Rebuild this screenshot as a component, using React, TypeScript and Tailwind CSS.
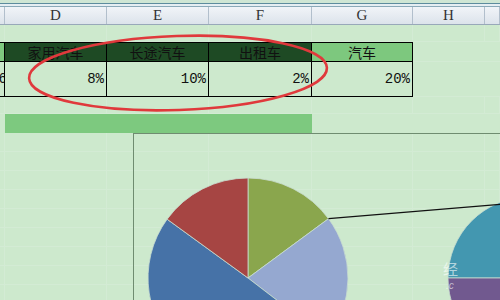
const cols = [
  { key: "C", w: "w-[5px]" },
  { key: "D", w: "w-[102px]" },
  { key: "E", w: "w-[102px]" },
  { key: "F", w: "w-[103px]" },
  { key: "G", w: "w-[101px]" },
  { key: "H", w: "w-[72px]" },
  { key: "I", w: "flex-1" },
];

function GridRow({ h }: { h: string }) {
  return (
    <div className={`flex ${h} border-b border-[#d3ebd4]`}>
      {cols.map((c) => (
        <div key={c.key} className={`${c.w} shrink-0 border-r border-[#d3ebd4]`} />
      ))}
    </div>
  );
}

function PieChart() {
  return (
    <div className="absolute left-[133px] top-[133px] w-[400px] h-[200px] border-l border-t border-[#6f8c70]">
      <svg width="400" height="200" viewBox="0 0 400 200" className="block">
        <g stroke="#c9ddd0" strokeWidth="0.8">
          <path d="M114 144 L114 44 A100 100 0 0 1 194.5 84.7 Z" fill="#8aa64d" />
          <path d="M114 144 L194.5 84.7 A100 100 0 0 1 193.3 204.9 Z" fill="#95a8d0" />
          <path d="M114 144 L193.3 204.9 A100 100 0 0 1 33.1 85.2 Z" fill="#4672a7" />
          <path d="M114 144 L33.1 85.2 A100 100 0 0 1 114 44 Z" fill="#a64543" />
          <path d="M314 144 A81 81 0 0 1 476 144 Z" fill="#4397b0" />
          <path d="M314 144 A81 81 0 0 0 476 144 Z" fill="#71598f" />
        </g>
        <line x1="194.5" y1="84.7" x2="370" y2="70" stroke="#111" strokeWidth="1.2" />
      </svg>
      <div className="absolute left-[309px] top-[127px] text-[15px] leading-none text-white/60 font-['Noto_Sans_CJK_SC',sans-serif]">
        经
      </div>
      <div className="absolute left-[312px] top-[147px] text-[10px] leading-none text-white/60 font-['Liberation_Sans',sans-serif] italic">
        .c
      </div>
    </div>
  );
}

export default function App() {
  const headers = [
    { label: "家用汽车", w: "w-[102px]" },
    { label: "长途汽车", w: "w-[102px]" },
    { label: "出租车", w: "w-[103px]" },
  ];
  const values = [
    { v: "8%", w: "w-[102px]" },
    { v: "10%", w: "w-[102px]" },
    { v: "2%", w: "w-[103px]" },
    { v: "20%", w: "w-[101px]" },
  ];

  return (
    <div className="relative w-[500px] h-[300px] overflow-hidden bg-[#cde9cd]">
      {/* top window chrome */}
      <div className="h-[3px] bg-[#cfe6d4]" />
      <div className="h-px bg-[#5d8c9e]" />
      <div className="h-[2px] bg-[#e6eef2]" />
      <div className="h-px bg-[#8aa9b8]" />

      {/* column headers */}
      <div className="flex h-[18px] border-b border-[#98a8b9] bg-gradient-to-b from-[#f1f4f8] to-[#dce3eb] text-[15px] leading-none text-[#333] font-['Liberation_Serif',serif]">
        {cols.map((c) => (
          <div
            key={c.key}
            className={`${c.w} shrink-0 flex items-center justify-center border-r border-[#b2bfcc]`}
          >
            {c.key !== "C" && c.key !== "I" ? c.key : ""}
          </div>
        ))}
      </div>

      <GridRow h="h-[17px]" />

      {/* table header */}
      <div className="flex h-[20px] text-[14px] leading-none text-[#111] font-['Noto_Sans_CJK_SC',sans-serif]">
        <div className="w-[5px] shrink-0 bg-[#7fc97f] border-y border-r border-black" />
        {headers.map((h) => (
          <div
            key={h.label}
            className={`${h.w} shrink-0 flex items-center justify-center bg-[#1e4a24] border-y border-r border-black`}
          >
            {h.label}
          </div>
        ))}
        <div className="w-[101px] shrink-0 flex items-center justify-center bg-[#7dc87e] border-y border-r border-black">
          汽车
        </div>
        <div className="flex-1 border-b border-[#d3ebd4]" />
      </div>

      {/* data row */}
      <div className="flex h-[35px] text-[14px] leading-none text-[#111] font-['Liberation_Mono',monospace]">
        <div className="w-[5px] shrink-0 overflow-hidden border-b border-r border-black flex items-center justify-end">
          <span className="-mr-[3px]">6</span>
        </div>
        {values.map((d) => (
          <div
            key={d.v}
            className={`${d.w} shrink-0 flex items-center justify-end pr-[2px] border-b border-r border-black`}
          >
            {d.v}
          </div>
        ))}
        <div className="flex-1 border-b border-[#d3ebd4]" />
      </div>

      <GridRow h="h-[17px]" />

      {/* green bar */}
      <div className="flex h-[19px]">
        <div className="w-[5px] shrink-0" />
        <div className="w-[307px] shrink-0 bg-[#7dc97f]" />
      </div>

      {Array.from({ length: 9 }).map((_, i) => (
        <GridRow key={i} h="h-[19px]" />
      ))}

      <PieChart />

      {/* red annotation ellipse */}
      <svg className="absolute left-0 top-0 pointer-events-none" width="500" height="140">
        <ellipse
          cx="178"
          cy="73"
          rx="149"
          ry="37"
          fill="none"
          stroke="#e0393c"
          strokeWidth="2.6"
          transform="rotate(-2 178 73)"
        />
      </svg>
    </div>
  );
}
